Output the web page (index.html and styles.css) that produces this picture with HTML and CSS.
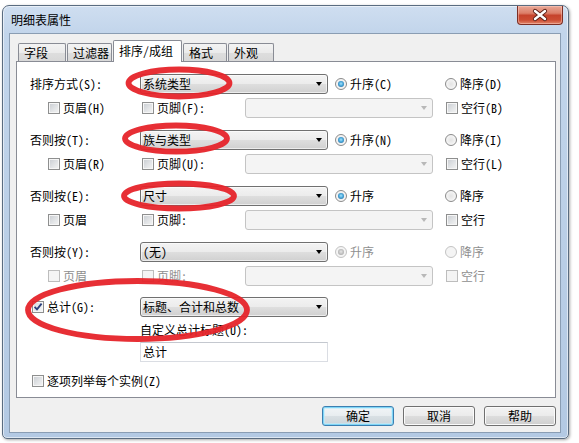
FILE: index.html
```html
<!DOCTYPE html>
<html lang="zh-CN">
<head>
<meta charset="utf-8">
<title>明细表属性</title>
<link rel="stylesheet" href="styles.css">
</head>
<body>
<div class="window">
  <div class="titlebar">
    <span class="title">明细表属性</span>
    <div class="close">
      <svg width="44" height="17" viewBox="0 0 44 17">
        <path d="M17 4 L27 12 M27 4 L17 12" stroke="#5b1f17" stroke-width="4.2" stroke-linecap="round" fill="none"/>
        <path d="M17 4 L27 12 M27 4 L17 12" stroke="#ffffff" stroke-width="2.4" stroke-linecap="round" fill="none"/>
      </svg>
    </div>
  </div>
  <div class="client">
    <div class="tabs">
      <div class="tab tab-fields">字段</div>
      <div class="tab tab-filter">过滤器</div>
      <div class="tab tab-sort active">排序/成组</div>
      <div class="tab tab-format">格式</div>
      <div class="tab tab-look">外观</div>
    </div>
    <div class="panel">
      <div class="group">
        <div class="row main">
          <span class="lbl">排序方式(S):</span>
          <div class="combo"><span class="val">系统类型</span><i class="arrow"></i></div>
          <label class="opt asc"><span class="radio on"></span>升序(C)</label>
          <label class="opt"><span class="radio"></span>降序(D)</label>
        </div>
        <div class="row sub">
          <label class="opt head"><span class="cb"></span>页眉(H)</label>
          <label class="opt foot"><span class="cb"></span>页脚(F):</label>
          <div class="combo disabled"><i class="arrow"></i></div>
          <label class="opt blank"><span class="cb"></span>空行(B)</label>
        </div>
      </div>
      <div class="group">
        <div class="row main">
          <span class="lbl">否则按(T):</span>
          <div class="combo"><span class="val">族与类型</span><i class="arrow"></i></div>
          <label class="opt asc"><span class="radio on"></span>升序(N)</label>
          <label class="opt"><span class="radio"></span>降序(I)</label>
        </div>
        <div class="row sub">
          <label class="opt head"><span class="cb"></span>页眉(R)</label>
          <label class="opt foot"><span class="cb"></span>页脚(U):</label>
          <div class="combo disabled"><i class="arrow"></i></div>
          <label class="opt blank"><span class="cb"></span>空行(L)</label>
        </div>
      </div>
      <div class="group">
        <div class="row main">
          <span class="lbl">否则按(E):</span>
          <div class="combo"><span class="val">尺寸</span><i class="arrow"></i></div>
          <label class="opt asc"><span class="radio on"></span>升序</label>
          <label class="opt"><span class="radio"></span>降序</label>
        </div>
        <div class="row sub">
          <label class="opt head"><span class="cb"></span>页眉</label>
          <label class="opt foot"><span class="cb"></span>页脚:</label>
          <div class="combo disabled"><i class="arrow"></i></div>
          <label class="opt blank"><span class="cb"></span>空行</label>
        </div>
      </div>
      <div class="group">
        <div class="row main">
          <span class="lbl">否则按(Y):</span>
          <div class="combo"><span class="val">(无)</span><i class="arrow"></i></div>
          <label class="opt asc off"><span class="radio on"></span>升序</label>
          <label class="opt off"><span class="radio"></span>降序</label>
        </div>
        <div class="row sub">
          <label class="opt head off"><span class="cb"></span>页眉</label>
          <label class="opt foot off"><span class="cb"></span>页脚:</label>
          <div class="combo disabled"><i class="arrow"></i></div>
          <label class="opt blank off"><span class="cb"></span>空行</label>
        </div>
      </div>
      <div class="row main total">
        <label class="opt lbl-total"><span class="cb checked"><svg width="10" height="10" viewBox="0 0 10 10"><path d="M1.6 4.8 L4 7.4 L8.6 1.6" stroke="#2b3f7c" stroke-width="1.8" fill="none"/></svg></span>总计(G):</label>
        <div class="combo"><span class="val">标题、合计和总数</span><i class="arrow"></i></div>
      </div>
      <div class="row caption">自定义总计标题(U):</div>
      <div class="textbox">总计</div>
      <div class="row each">
        <label class="opt"><span class="cb"></span>逐项列举每个实例(Z)</label>
      </div>
    </div>
    <div class="buttons">
      <div class="btn default">确定</div>
      <div class="btn">取消</div>
      <div class="btn">帮助</div>
    </div>
  </div>
</div>
<svg class="marks" width="579" height="443" viewBox="0 0 579 443">
  <g fill="none" stroke="#e62228" stroke-width="5.8" stroke-opacity="0.94">
    <ellipse cx="179" cy="83" rx="50.5" ry="13.5"/>
    <ellipse cx="176" cy="138.5" rx="51" ry="13"/>
    <ellipse cx="179" cy="196" rx="55" ry="12.5"/>
    <ellipse cx="137.5" cy="310" rx="109.5" ry="29"/>
  </g>
</svg>
</body>
</html>
```
FILE: styles.css
```css
* { box-sizing: border-box; }

html, body {
  margin: 0;
  padding: 0;
  background: #ffffff;
}

body {
  position: relative;
  width: 579px;
  height: 443px;
  overflow: hidden;
  font-family: "Noto Sans Mono CJK SC", "Noto Sans CJK SC", sans-serif;
  font-size: 12px;
  line-height: 16px;
  color: #000;
}

.window {
  margin: 5px 0 0 2px;
  width: 567px;
  height: 434px;
  border: 1px solid #5a6c80;
  border-radius: 7px 7px 5px 5px;
  padding: 0 7px 5px 6px;
  display: flex;
  flex-direction: column;
  background: linear-gradient(180deg, #cfdef0 0px, #c2d5eb 27px, #b9cee6 60%, #b3c9e3 100%);
  box-shadow: inset 0 0 0 1px rgba(255, 255, 255, 0.55), 1px 1px 3px rgba(0, 0, 0, 0.35);
}

.titlebar {
  height: 27px;
  flex: none;
  display: flex;
  align-items: center;
}

.title {
  padding-left: 2px;
  font-size: 12px;
}

.close {
  margin-left: auto;
  margin-right: -2px;
  align-self: flex-start;
  width: 46px;
  height: 19px;
  border: 1px solid #7c2e24;
  border-top: none;
  border-radius: 0 0 4px 4px;
  background: linear-gradient(180deg, #e8a896 0%, #dc7e68 40%, #c6432c 52%, #cc4d33 78%, #e2866a 100%);
  box-shadow: inset 0 0 0 1px rgba(255, 210, 200, 0.45);
  display: flex;
  align-items: center;
  justify-content: center;
}

.client {
  flex: 1;
  border: 1px solid #8a9db3;
  background: #f0f0f0;
  padding: 6px 4px 0 6px;
  display: flex;
  flex-direction: column;
}

.tabs {
  position: relative;
  z-index: 1;
  display: flex;
  align-items: flex-end;
  height: 22px;
  margin-bottom: -1px;
  padding-left: 2px;
}

.tab {
  height: 18px;
  margin-bottom: 1px;
  margin-right: 1px;
  padding-left: 5px;
  border: 1px solid #898c95;
  border-bottom: none;
  border-radius: 2px 2px 0 0;
  background: linear-gradient(180deg, #f3f3f3 0%, #ebebeb 50%, #dedede 51%, #d8d8d8 100%);
  line-height: 17px;
  white-space: nowrap;
}

.tab.active {
  height: 22px;
  margin-bottom: 0;
  background: #ffffff;
  line-height: 19px;
  padding-left: 5px;
}

.tab-fields { width: 48px; }
.tab-filter { width: 45px; }
.tab-sort { width: 69px; }
.tab-format { width: 44px; }
.tab-look { width: 46px; }

.panel {
  border: 1px solid #898c95;
  background: #ffffff;
  padding: 12px 0 8px 13px;
  display: flex;
  flex-direction: column;
}

.group {
  display: flex;
  flex-direction: column;
  gap: 4px;
  margin-bottom: 12px;
}

.group:nth-child(4) { margin-bottom: 11px; }

.row {
  display: flex;
  align-items: center;
  height: 20px;
}

.lbl {
  width: 110px;
  flex: none;
  white-space: nowrap;
}

.combo {
  width: 188px;
  height: 20px;
  flex: none;
  display: flex;
  align-items: center;
  border: 1px solid #707070;
  border-radius: 3px;
  background: linear-gradient(180deg, #f3f3f3 0%, #ececec 48%, #dedede 52%, #d0d0d0 100%);
  box-shadow: inset 0 0 0 1px rgba(255, 255, 255, 0.6);
  padding-left: 2px;
}

.combo .val {
  white-space: nowrap;
}

.arrow {
  margin-left: auto;
  margin-right: 5px;
  width: 0;
  height: 0;
  border-left: 3.5px solid transparent;
  border-right: 3.5px solid transparent;
  border-top: 4px solid #000;
}

.combo.disabled {
  border-color: #c4c4c4;
  background: #f4f4f4;
  box-shadow: none;
}

.combo.disabled .arrow {
  border-top-color: #b8b8b8;
}

.opt {
  display: flex;
  align-items: center;
  gap: 3px;
  white-space: nowrap;
  flex: none;
}

.opt.off { color: #8f8f8f; }

.asc {
  margin-left: 7px;
  width: 110px;
}

.sub { padding-left: 18px; }
.head { width: 94px; }
.foot { width: 103px; }
.blank { margin-left: 13px; }

.radio {
  width: 12px;
  height: 12px;
  border-radius: 50%;
  border: 1px solid #8b8b8b;
  background: radial-gradient(circle at 50% 50%, #e3e3e3 0%, #f2f2f2 55%, #fbfbfb 100%);
  display: flex;
  align-items: center;
  justify-content: center;
  flex: none;
}

.radio.on::after {
  content: "";
  width: 6px;
  height: 6px;
  border-radius: 50%;
  background: radial-gradient(circle at 50% 45%, #a8e4fb 0%, #49a8dc 45%, #1c5a8a 100%);
}

.off .radio {
  border-color: #c3c3c3;
  background: #f4f4f4;
}

.off .radio.on::after {
  background: radial-gradient(circle at 50% 45%, #e6e6e6 0%, #b8b8b8 60%, #9a9a9a 100%);
}

.cb {
  width: 12px;
  height: 12px;
  flex: none;
  border: 1px solid #8e8f8f;
  background: linear-gradient(135deg, #c8ccd1 0%, #e4e6e8 60%, #f4f4f4 100%);
  box-shadow: inset 0 0 0 1px #f6f6f6;
  display: flex;
  align-items: center;
  justify-content: center;
}

.cb.checked {
  background: linear-gradient(135deg, #d6d9dd 0%, #eef0f1 70%, #f8f8f8 100%);
}

.off .cb {
  border-color: #bdbdbd;
  background: #f4f4f4;
  box-shadow: none;
}

.total { margin-top: 0; }

.lbl-total {
  width: 110px;
  padding-left: 2px;
}

.caption {
  margin-top: 4px;
  height: 17px;
  padding-left: 110px;
}

.textbox {
  margin-top: 4px;
  margin-left: 110px;
  width: 188px;
  height: 20px;
  border: 1px solid #dadde3;
  border-top-color: #c4c8cf;
  padding-left: 2px;
  line-height: 18px;
  background: #fff;
}

.each {
  margin-top: 11px;
  height: 16px;
  padding-left: 2px;
}

.buttons {
  display: flex;
  justify-content: flex-end;
  gap: 9px;
  padding-top: 8px;
}

.btn {
  width: 72px;
  height: 20px;
  border: 1px solid #707070;
  border-radius: 3px;
  background: linear-gradient(180deg, #f3f3f3 0%, #ebebeb 48%, #dddddd 52%, #cfcfcf 100%);
  box-shadow: inset 0 0 0 1px #fbfbfb;
  text-align: center;
  line-height: 18px;
}

.btn.default {
  border-color: #3c7fb1;
  background: linear-gradient(180deg, #f2f5f7 0%, #e8edf0 48%, #d9e0e4 52%, #ccd4d9 100%);
  box-shadow: inset 0 0 0 1px #7fd6f7, inset 0 0 0 2px rgba(190, 235, 252, 0.6);
}

.marks {
  position: absolute;
  top: 0;
  left: 0;
  z-index: 10;
  pointer-events: none;
}
```
